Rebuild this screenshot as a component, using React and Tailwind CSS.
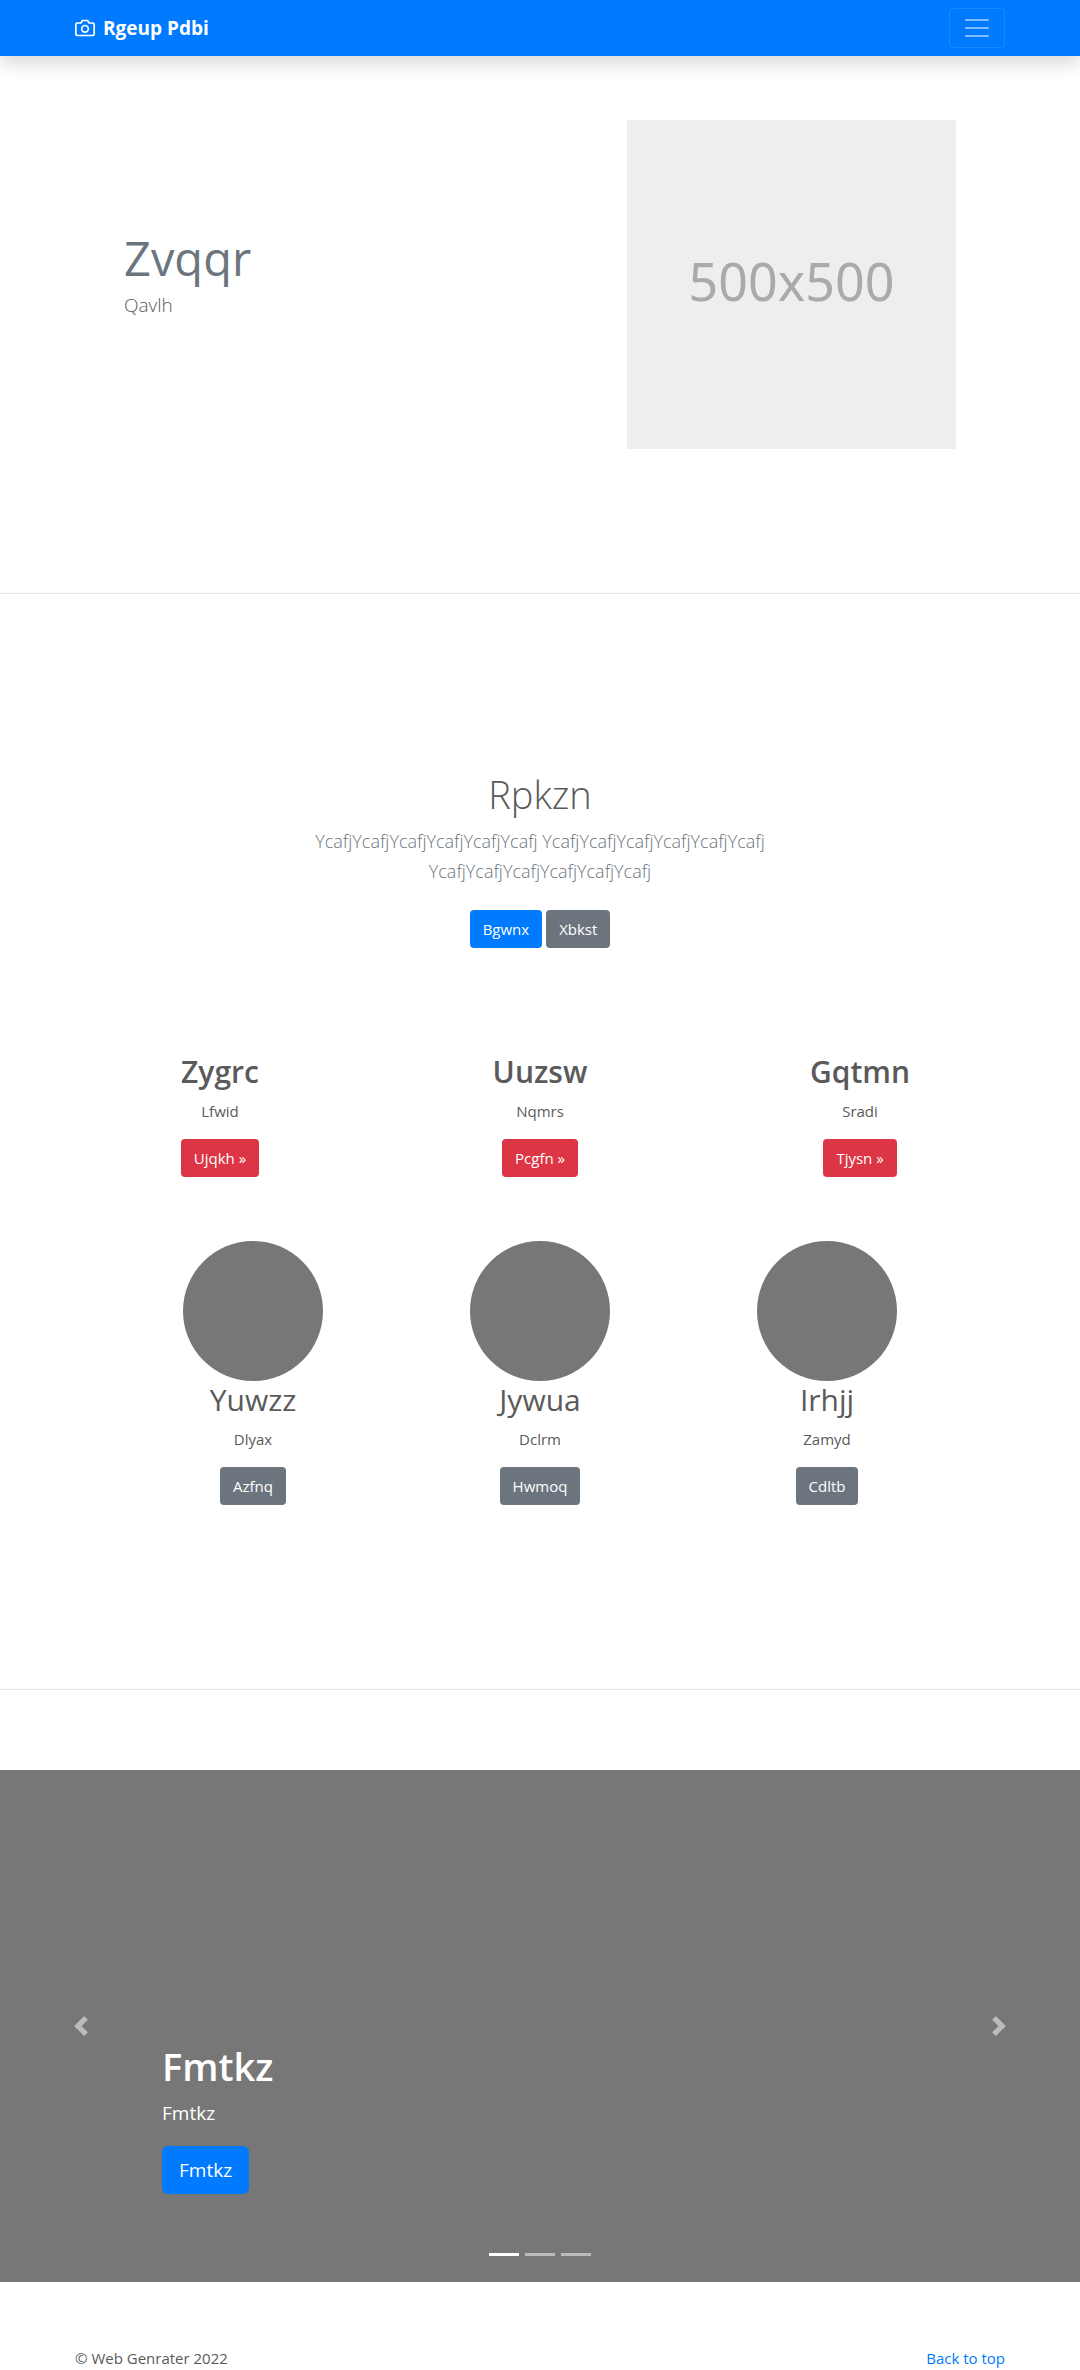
import React from "react";

const columns = [
  { title: "Zygrc", text: "Lfwid", action: "Ujqkh »" },
  { title: "Uuzsw", text: "Nqmrs", action: "Pcgfn »" },
  { title: "Gqtmn", text: "Sradi", action: "Tjysn »" },
];

const people = [
  { title: "Yuwzz", text: "Dlyax", action: "Azfnq" },
  { title: "Jywua", text: "Dclrm", action: "Hwmoq" },
  { title: "Irhjj", text: "Zamyd", action: "Cdltb" },
];

const button = "rounded px-[13px] py-[7px] leading-6 text-[15px] text-white";

export default function App() {
  return (
    <div className="min-h-screen bg-white font-['Open_Sans','Noto_Sans',sans-serif] text-[15px] leading-6 text-[#5a5a5a]">
      <header className="relative bg-[#007bff] shadow-[0_8px_16px_rgba(0,0,0,0.15)]">
        <div className="mx-auto flex h-14 max-w-[930px] items-center justify-between">
          <a href="#top" className="flex items-center gap-2 text-[19px] font-bold text-white">
            <svg viewBox="0 0 24 24" className="size-5" fill="none" stroke="currentColor" strokeWidth="2" strokeLinecap="round" strokeLinejoin="round" aria-hidden="true">
              <path d="M23 19a2 2 0 0 1-2 2H3a2 2 0 0 1-2-2V8a2 2 0 0 1 2-2h4l2-3h6l2 3h4a2 2 0 0 1 2 2z" />
              <circle cx="12" cy="13" r="4" />
            </svg>
            Rgeup Pdbi
          </a>
          <button type="button" aria-label="Toggle navigation" className="flex h-10 w-14 items-center justify-center rounded border border-white/10">
            <svg viewBox="0 0 30 30" className="size-[30px]" aria-hidden="true">
              <path d="M4 7h22M4 15h22M4 23h22" stroke="rgba(255,255,255,0.5)" strokeWidth="2" strokeLinecap="round" strokeMiterlimit="10" />
            </svg>
          </button>
        </div>
      </header>

      <main>
        <section className="mx-auto flex max-w-[862px] items-start justify-between px-[15px] pt-16 pb-36">
          <div className="pt-[108px]">
            <h2 className="text-[47px] leading-[60px] text-[#6c757d]">Zvqqr</h2>
            <p className="mt-0.5 text-[19px] leading-[30px] font-light">Qavlh</p>
          </div>
          <div className="flex size-[329px] items-center justify-center bg-[#eee] pb-2 font-['Noto_Sans',sans-serif] text-[52px] leading-none text-[#aaa]">500x500</div>
        </section>

        <hr className="border-black/10" />

        <section className="mx-auto max-w-[500px] pt-44 text-center">
          <h1 className="text-[38px] leading-[48px] font-light">Rpkzn</h1>
          <p className="mt-2 text-[18px] leading-[30px] font-light text-[#6c757d]">
            YcafjYcafjYcafjYcafjYcafjYcafj YcafjYcafjYcafjYcafjYcafjYcafj YcafjYcafjYcafjYcafjYcafjYcafj
          </p>
          <div className="mt-6 flex justify-center gap-1">
            <button type="button" className={button + " bg-[#007bff]"}>Bgwnx</button>
            <button type="button" className={button + " bg-[#6c757d]"}>Xbkst</button>
          </div>
        </section>

        <section className="mx-auto grid max-w-[960px] grid-cols-3 pt-[105px] text-center">
          {columns.map((item) => (
            <div key={item.title} className="flex flex-col items-center">
              <h2 className="text-[30px] leading-[38px] font-semibold">{item.title}</h2>
              <p className="mt-2">{item.text}</p>
              <button type="button" className={button + " mt-4 bg-[#dc3545]"}>{item.action}</button>
            </div>
          ))}
        </section>

        <section className="mx-auto grid max-w-[861px] grid-cols-3 pt-16 pb-[184px] text-center">
          {people.map((item) => (
            <div key={item.title} className="flex flex-col items-center">
              <div className="size-[140px] rounded-full bg-[#777]" />
              <h2 className="text-[30px] leading-[38px]">{item.title}</h2>
              <p className="mt-2">{item.text}</p>
              <button type="button" className={button + " mt-4 bg-[#6c757d]"}>{item.action}</button>
            </div>
          ))}
        </section>

        <hr className="border-black/10" />

        <section aria-label="Slides" className="relative mt-20 flex h-[512px] items-end bg-[#777] px-[15%] pb-[88px] text-white">
          <div>
            <h1 className="text-[38px] leading-[48px] font-semibold">Fmtkz</h1>
            <p className="mt-2 text-[19px] leading-[30px]">Fmtkz</p>
            <button type="button" className="mt-[18px] block rounded-md bg-[#007bff] px-[17px] py-[9px] text-[19px] leading-[30px]">Fmtkz</button>
          </div>
          <button type="button" aria-label="Previous" className="absolute inset-y-0 left-0 flex w-[15%] items-center justify-center opacity-50">
            <svg viewBox="0 0 8 8" className="size-5" fill="#fff" aria-hidden="true"><path d="M5.25 0l-4 4 4 4 1.5-1.5-2.5-2.5 2.5-2.5-1.5-1.5z" /></svg>
          </button>
          <button type="button" aria-label="Next" className="absolute inset-y-0 right-0 flex w-[15%] items-center justify-center opacity-50">
            <svg viewBox="0 0 8 8" className="size-5" fill="#fff" aria-hidden="true"><path d="M2.75 0l-1.5 1.5 2.5 2.5-2.5 2.5 1.5 1.5 4-4-4-4z" /></svg>
          </button>
          <div className="absolute inset-x-0 bottom-[26px] flex justify-center gap-[6px]">
            <button type="button" aria-label="Slide 1" className="h-[3px] w-[30px] bg-white" />
            <button type="button" aria-label="Slide 2" className="h-[3px] w-[30px] bg-white/50" />
            <button type="button" aria-label="Slide 3" className="h-[3px] w-[30px] bg-white/50" />
          </div>
        </section>
      </main>

      <footer className="mx-auto flex max-w-[930px] justify-between pt-16">
        <p>© Web Genrater 2022</p>
        <a href="#top" className="text-[#007bff]">Back to top</a>
      </footer>
    </div>
  );
}
